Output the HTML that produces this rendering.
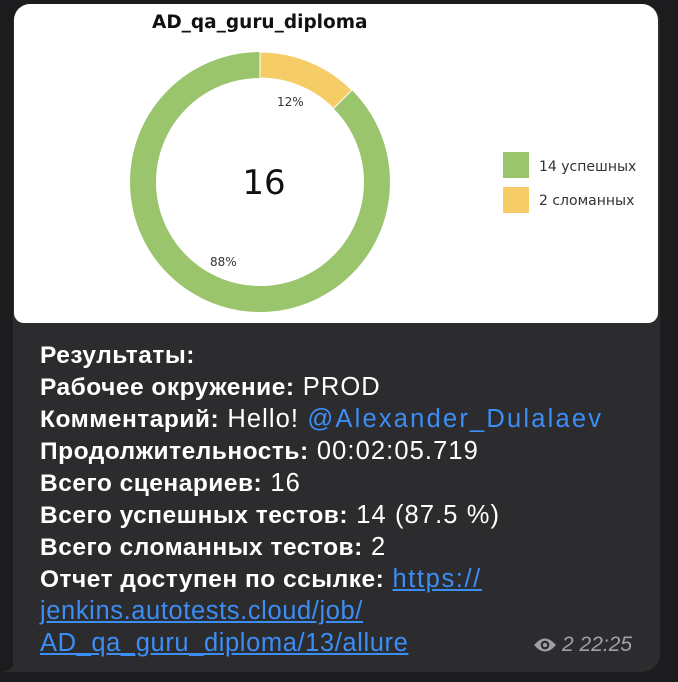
<!DOCTYPE html>
<html><head><meta charset="utf-8"><style>
body{margin:0;width:678px;height:682px;background:#1c1c1e;position:relative;overflow:hidden;font-family:"Liberation Sans",sans-serif}
.bubble{position:absolute;left:13px;top:4px;width:647px;height:668px;background:#2c2c2e;border-radius:18px 18px 18px 4px}
.tail{position:absolute;left:2px;top:650px;width:22px;height:22px}
.img{position:absolute;left:14px;top:4px;width:644px;height:319px;background:#fff;border-radius:16px 16px 10px 10px;overflow:hidden}
.txt{position:absolute;left:40px;top:339px;color:#fff;font-size:25.5px;letter-spacing:1.1px;font-weight:400;white-space:nowrap}
.txt div{height:32px;line-height:32px}
b{font-weight:700;letter-spacing:0.5px;font-size:24.5px}
a{color:#3a8ef6;text-decoration:underline;letter-spacing:0.6px}
.at{color:#3a8ef6;letter-spacing:2.2px}
.meta{position:absolute;left:533px;top:633px;color:#a0a0a6;font-size:21px;font-style:italic;display:flex;align-items:center;gap:5px}
</style></head><body>
<svg class="tail" viewBox="0 0 22 22"><path d="M11 0 V14 Q10 20 0 22 H22 V0Z" fill="#2c2c2e"/></svg>
<div class="bubble"></div>
<div class="img">
<svg width="644" height="319" viewBox="0 0 644 319" style="position:absolute;left:0;top:0">
<text x="138" y="24" font-family="DejaVu Sans,sans-serif" font-weight="bold" font-size="18.5" fill="#111">AD_qa_guru_diploma</text>
<circle cx="246" cy="178" r="117" fill="none" stroke="#9bc56d" stroke-width="26"/>
<path d="M246 48 A130 130 0 0 1 337.9 86.1 L319.5 104.5 A104 104 0 0 0 246 74 Z" fill="#f6cc66" stroke="#fff" stroke-width="1"/>
<text x="263" y="102" font-family="DejaVu Sans,sans-serif" font-size="12" fill="#333">12%</text>
<text x="196" y="262" font-family="DejaVu Sans,sans-serif" font-size="12" fill="#333">88%</text>
<text x="250" y="190" text-anchor="middle" font-family="DejaVu Sans,sans-serif" font-size="34" fill="#111">16</text>
<rect x="489" y="148" width="26" height="26" fill="#9bc56d"/>
<rect x="489" y="183" width="26" height="26" fill="#f6cc66"/>
<text x="525" y="167" font-family="DejaVu Sans,sans-serif" font-size="14" fill="#333">14 успешных</text>
<text x="525" y="201" font-family="DejaVu Sans,sans-serif" font-size="14" fill="#333">2 сломанных</text>
</svg>
</div>
<div class="txt">
<div><b>Результаты:</b></div>
<div><b>Рабочее окружение:</b> PROD</div>
<div><b>Комментарий:</b> Hello! <span class="at">@Alexander_Dulalaev</span></div>
<div><b>Продолжительность:</b> 00:02:05.719</div>
<div><b>Всего сценариев:</b> 16</div>
<div><b>Всего успешных тестов:</b> 14 (87.5 %)</div>
<div><b>Всего сломанных тестов:</b> 2</div>
<div><b>Отчет доступен по ссылке:</b> <a style="letter-spacing:1.6px">https://</a></div>
<div><a>jenkins.autotests.cloud/job/</a></div>
<div><a style="letter-spacing:0.6px">AD_qa_guru_diploma/13/allure</a></div>
</div>
<div class="meta"><svg width="24" height="18" viewBox="0 0 22 16"><path d="M1 8 Q11 -4 21 8 Q11 20 1 8Z" fill="#a0a0a6"/><circle cx="11" cy="8" r="4" fill="#2c2c2e"/><circle cx="11" cy="8" r="2" fill="#a0a0a6"/></svg><span>2 22:25</span></div>
</body></html>
